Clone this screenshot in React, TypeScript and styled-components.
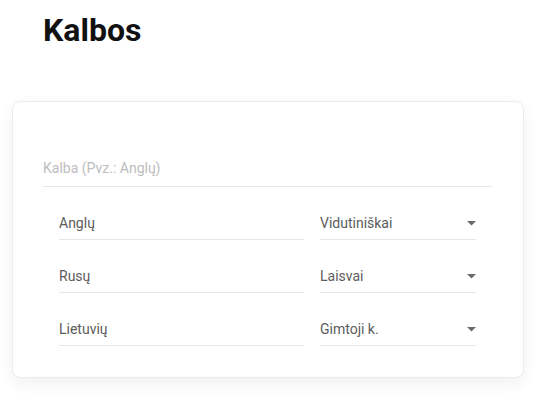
import React from 'react';
import styled, { createGlobalStyle } from 'styled-components';

const GlobalStyle = createGlobalStyle`
  body {
    margin: 0;
    background: #fff;
    font-family: Roboto, "Noto Sans", sans-serif;
  }
`;

const languages = [
  { name: 'Anglų', level: 'Vidutiniškai' },
  { name: 'Rusų', level: 'Laisvai' },
  { name: 'Lietuvių', level: 'Gimtoji k.' },
];

export default function App() {
  return (
    <>
      <GlobalStyle />
      <Page>
        <Title>Kalbos</Title>
        <Card>
          <NewInput placeholder="Kalba (Pvz.: Anglų)" />
          <List>
            {languages.map((l) => (
              <Row key={l.name}>
                <NameInput defaultValue={l.name} />
                <Select>
                  <span>{l.level}</span>
                  <svg width="9" height="5" viewBox="0 0 9 5">
                    <path d="M0 0 L4.5 4.5 L9 0 Z" fill="#6a6a6a" />
                  </svg>
                </Select>
              </Row>
            ))}
          </List>
        </Card>
      </Page>
    </>
  );
}

const Page = styled.div`
  padding: 11px 12px 20px;
`;

const Title = styled.h1`
  margin: 0 0 52px 31px;
  font-size: 32px;
  line-height: 38px;
  font-weight: 700;
  color: #111;
`;

const Card = styled.div`
  width: 512px;
  box-sizing: border-box;
  border: 1px solid #ececec;
  border-radius: 8px;
  background: #fff;
  box-shadow: 0 6px 16px rgba(0, 0, 0, 0.06);
  padding: 56px 31px 31px 30px;
`;

const fieldBase = `
  display: block;
  box-sizing: content-box;
  border: none;
  border-bottom: 1px solid #e6e6e6;
  outline: none;
  background: transparent;
  padding: 0;
  font-family: Roboto, "Noto Sans", sans-serif;
  font-size: 14px;
  line-height: 20px;
  height: 20px;
`;

const NewInput = styled.input`
  ${fieldBase}
  width: 100%;
  padding-bottom: 8px;
  color: #5c5c5c;

  &::placeholder {
    color: #bdbdbd;
  }
`;

const List = styled.div`
  display: flex;
  flex-direction: column;
  gap: 26px;
  margin-top: 26px;
  padding: 0 16px;
`;

const Row = styled.div`
  display: flex;
  gap: 16px;
`;

const NameInput = styled.input`
  ${fieldBase}
  flex: 1;
  min-width: 0;
  padding-bottom: 6px;
  color: #5c5c5c;
`;

const Select = styled.div`
  ${fieldBase}
  width: 156px;
  padding-bottom: 6px;
  color: #5c5c5c;
  display: flex;
  align-items: center;
  justify-content: space-between;

  svg {
    flex: none;
  }
`;
